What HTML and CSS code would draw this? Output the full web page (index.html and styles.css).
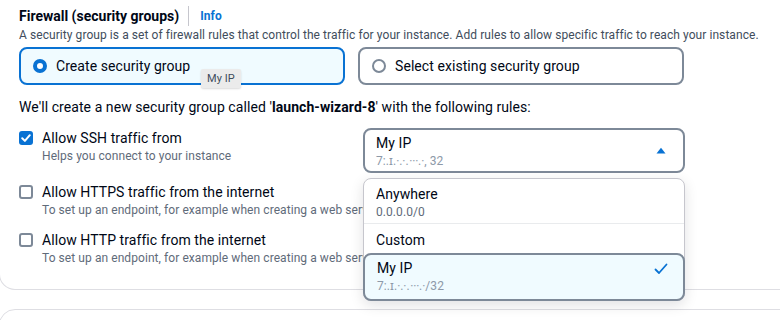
FILE: index.html
```html
<!DOCTYPE html>
<html lang="en">
<head>
    <meta charset="utf-8" />
    <title>Firewall (security groups)</title>
    <link rel="stylesheet" href="styles.css">
</head>
<body>
    <div class="card">
        <div class="header">
            <h2 class="title">Firewall (security groups)</h2>
            <span class="divider"></span>
            <a class="info" href="#">Info</a>
        </div>
        <p class="desc">A security group is a set of firewall rules that control the traffic for your instance. Add rules to allow specific traffic to reach your instance.</p>

        <div class="tiles">
            <div class="tile tile-selected">
                <span class="radio radio-on"></span>
                <span>Create security group</span>
            </div>
            <div class="tile">
                <span class="radio"></span>
                <span>Select existing security group</span>
            </div>
            <span class="tooltip">My IP</span>
        </div>

        <p class="intro">We'll create a new security group called '<b>launch-wizard-8</b>' with the following rules:</p>

        <div class="rules">
            <div class="rule rule-first">
                <div class="rule-main">
                    <span class="check check-on">
                        <svg width="14" height="14" viewBox="0 0 14 14"><path d="M3.2 7.2 L5.9 9.9 L10.8 4.2" fill="none" stroke="#fff" stroke-width="2" stroke-linecap="round" stroke-linejoin="round"/></svg>
                    </span>
                    <div>
                        <div class="rule-label">Allow SSH traffic from</div>
                        <div class="rule-sub">Helps you connect to your instance</div>
                    </div>
                </div>
                <div class="select-trigger">
                    <div>
                        <div class="opt-label">My IP</div>
                        <div class="opt-sub ip">7:.ɪ.ᐧ.ᐧ.ᐧᐧᐧ.ᐧ, 32</div>
                    </div>
                    <svg class="caret" width="10" height="7" viewBox="0 0 10 7"><path d="M0.5 6.5 L5 0.8 L9.5 6.5 Z" fill="#0972d3"/></svg>
                </div>
            </div>

            <div class="rule">
                <div class="rule-main">
                    <span class="check"></span>
                    <div>
                        <div class="rule-label">Allow HTTPS traffic from the internet</div>
                        <div class="rule-sub">To set up an endpoint, for example when creating a web server</div>
                    </div>
                </div>
            </div>

            <div class="rule">
                <div class="rule-main">
                    <span class="check"></span>
                    <div>
                        <div class="rule-label">Allow HTTP traffic from the internet</div>
                        <div class="rule-sub">To set up an endpoint, for example when creating a web server</div>
                    </div>
                </div>
            </div>

            <ul class="select-list">
                <li class="option">
                    <div class="opt-label">Anywhere</div>
                    <div class="opt-sub">0.0.0.0/0</div>
                </li>
                <li class="option option-plain">
                    <div class="opt-label">Custom</div>
                </li>
                <li class="option option-selected">
                    <div>
                        <div class="opt-label">My IP</div>
                        <div class="opt-sub ip">7:.ɪ.ᐧ.ᐧ.ᐧᐧᐧ.ᐧ/32</div>
                    </div>
                    <svg class="tick" width="14" height="12" viewBox="0 0 14 12"><path d="M1.5 6.5 L5 10 L12.5 1.5" fill="none" stroke="#0972d3" stroke-width="1.8" stroke-linecap="round" stroke-linejoin="round"/></svg>
                </li>
            </ul>
        </div>
    </div>

    <div class="card card-next"></div>
</body>
</html>
```

FILE: styles.css
```css
body {
    margin: 0;
    font-family: Roboto, "Noto Sans", sans-serif;
    letter-spacing: 0.07px;
    color: #000716;
    background-color: #ffffff;
    overflow: hidden;
}

.card {
    margin-left: -1px;
    width: 800px;
    padding: 5px 0 23px 19px;
    border: 1px solid #dedee3;
    border-top: none;
    border-radius: 0 0 16px 16px;
    box-sizing: border-box;
}

.card-next {
    margin-top: 19px;
    height: 40px;
    border-top: 1px solid #dedee3;
    border-radius: 16px 16px 0 0;
}

.header {
    display: flex;
    align-items: center;
    height: 22px;
}

.title {
    margin: 0;
    font-size: 14px;
    font-weight: 700;
    line-height: 22px;
    letter-spacing: 0;
}

.divider {
    width: 1px;
    height: 20px;
    margin: 0 11px 0 9px;
    background-color: #c6c6cd;
}

.info {
    font-size: 12px;
    font-weight: 700;
    color: #0972d3;
    text-decoration: none;
}

.desc {
    margin: 0;
    font-size: 12px;
    line-height: 16px;
    color: #414d5c;
    white-space: nowrap;
}

.tiles {
    position: relative;
    display: grid;
    grid-template-columns: 326px 326px;
    gap: 13px;
    margin-top: 4px;
}

.tile {
    display: flex;
    align-items: center;
    gap: 9px;
    height: 38px;
    padding: 0 12px;
    font-size: 14px;
    border: 2px solid #7d8998;
    border-radius: 8px;
    box-sizing: border-box;
}

.tile-selected {
    border-color: #0972d3;
    background-color: #f0fbff;
}

.radio {
    width: 14px;
    height: 14px;
    border: 2px solid #7d8998;
    border-radius: 50%;
    box-sizing: border-box;
    background-color: #fff;
}

.radio-on {
    border: 4px solid #0972d3;
}

.tooltip {
    position: absolute;
    left: 182px;
    top: 22px;
    padding: 0 6px;
    height: 19px;
    line-height: 19px;
    font-size: 11px;
    color: #414d5c;
    background-color: #ebebeb;
    border-radius: 2px;
    box-shadow: 0 1px 2px rgba(0, 0, 0, 0.15);
}

.intro {
    margin: 12px 0 11px;
    font-size: 14px;
    line-height: 20px;
}

.rules {
    position: relative;
}

.rule {
    margin-bottom: 12px;
}

.rule:last-of-type {
    margin-bottom: 0;
}

.rule-first {
    display: grid;
    grid-template-columns: 344px 322px;
    margin-bottom: 9px;
}

.rule-main {
    display: flex;
    gap: 9px;
    white-space: nowrap;
}

.check {
    flex: none;
    width: 14px;
    height: 14px;
    margin-top: 3px;
    border: 2px solid #7d8998;
    border-radius: 3px;
    box-sizing: border-box;
}

.check-on {
    border: none;
    background-color: #0972d3;
}

.check svg {
    display: block;
}

.rule-label {
    font-size: 14px;
    line-height: 20px;
}

.rule-sub {
    font-size: 12px;
    line-height: 16px;
    color: #5f6b7a;
}

.select-trigger {
    display: flex;
    align-items: center;
    justify-content: space-between;
    height: 45px;
    padding: 0 17px 0 11px;
    border: 2px solid #7d8998;
    border-radius: 8px;
    box-sizing: border-box;
}

.opt-label {
    font-size: 14px;
    line-height: 20px;
}

.opt-sub {
    font-size: 12px;
    line-height: 16px;
    color: #5f6b7a;
}

.ip {
    color: #8d99a8;
}

.select-list {
    position: absolute;
    left: 344px;
    top: 50px;
    width: 322px;
    margin: 0;
    padding: 0;
    list-style: none;
    background-color: #fff;
    border: 1px solid #c6c6cd;
    border-radius: 8px;
    box-sizing: border-box;
    box-shadow: 0 4px 14px rgba(0, 7, 22, 0.12);
}

.option {
    padding: 5px 12px 3px;
    border-bottom: 1px solid #e9ebed;
}

.option-plain {
    padding: 6px 12px 3px;
    border-bottom: none;
}

.option-selected {
    display: flex;
    align-items: center;
    justify-content: space-between;
    margin: 0 -1px -1px;
    padding: 3px 15px 5px 12px;
    background-color: #f0fbff;
    border: 2px solid #7d8998;
    border-radius: 8px;
}

.tick {
    margin-top: -14px;
}
```
